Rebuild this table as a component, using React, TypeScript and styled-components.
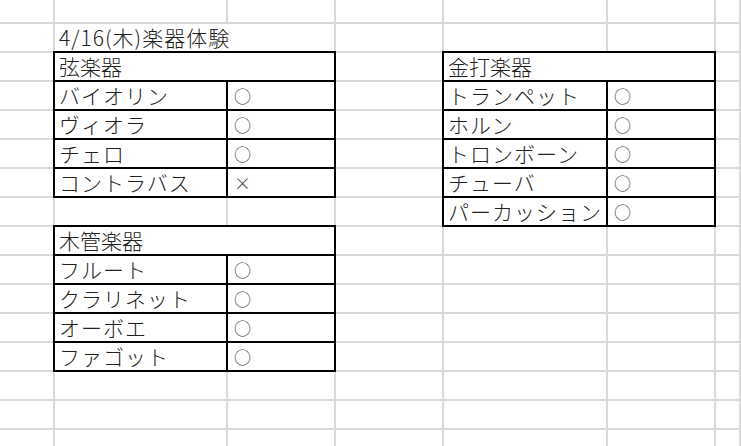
import { Fragment } from "react";
import styled, { createGlobalStyle } from "styled-components";

type Row = { name: string; mark: string };
type Section = { title: string; col: string; row: string; widths: string; rows: Row[] };

const GlobalStyle = createGlobalStyle`
  html, body {
    margin: 0;
    padding: 0;
    background: #fff;
  }
  body {
    font-family: "Noto Sans CJK JP", "Noto Sans", sans-serif;
    overflow: hidden;
  }
`;

const Sheet = styled.div`
  display: grid;
  grid-template-columns: 55px 173px 108px 108px 164px 108px 1fr;
  grid-template-rows: 24px repeat(15, 29px);
  width: 741px;
  height: 446px;
  overflow: hidden;
  background: #fff;
`;

const Cell = styled.div`
  box-sizing: border-box;
  border-right: 2px solid #dadada;
  border-bottom: 2px solid #dadada;
`;

const Title = styled(Cell)`
  grid-column: 2 / 4;
  grid-row: 2;
  padding-left: 4px;
  font-size: 21px;
  font-weight: 300;
  line-height: 26px;
  letter-spacing: 1px;
  color: #222;
  white-space: nowrap;
`;

const Table = styled.div<{ $col: string; $row: string; $widths: string }>`
  grid-column: ${(p) => p.$col};
  grid-row: ${(p) => p.$row};
  margin: -2px 0 0 -2px;
  position: relative;
  z-index: 1;
  display: grid;
  grid-template-columns: ${(p) => p.$widths};
  grid-auto-rows: 29px;
  border-top: 2px solid #000;
  border-left: 2px solid #000;
  background: #fff;
`;

const TableCell = styled.div<{ $span?: boolean }>`
  box-sizing: border-box;
  grid-column: ${(p) => (p.$span ? "1 / 3" : "auto")};
  border-right: 2px solid #000;
  border-bottom: 2px solid #000;
  padding-left: 4px;
  font-size: 21px;
  font-weight: 300;
  line-height: 26px;
  letter-spacing: ${(p) => (p.$span ? "0" : "1px")};
  color: #222;
  white-space: nowrap;
`;

const MarkCell = styled.div`
  box-sizing: border-box;
  display: flex;
  align-items: center;
  border-right: 2px solid #000;
  border-bottom: 2px solid #000;
  padding-left: 6px;
  font-size: 17px;
  font-weight: 300;
  color: #333;
`;

const sections: Section[] = [
  {
    title: "弦楽器",
    col: "2 / 4",
    row: "3 / 8",
    widths: "173px 108px",
    rows: [
      { name: "バイオリン", mark: "○" },
      { name: "ヴィオラ", mark: "○" },
      { name: "チェロ", mark: "○" },
      { name: "コントラバス", mark: "×" },
    ],
  },
  {
    title: "木管楽器",
    col: "2 / 4",
    row: "9 / 14",
    widths: "173px 108px",
    rows: [
      { name: "フルート", mark: "○" },
      { name: "クラリネット", mark: "○" },
      { name: "オーボエ", mark: "○" },
      { name: "ファゴット", mark: "○" },
    ],
  },
  {
    title: "金打楽器",
    col: "5 / 7",
    row: "3 / 9",
    widths: "164px 108px",
    rows: [
      { name: "トランペット", mark: "○" },
      { name: "ホルン", mark: "○" },
      { name: "トロンボーン", mark: "○" },
      { name: "チューバ", mark: "○" },
      { name: "パーカッション", mark: "○" },
    ],
  },
];

// 7 columns x 16 rows, minus the title and the three tables
const used = 2 + sections.reduce((n, s) => n + (s.rows.length + 1) * 2, 0);
const fillers = 7 * 16 - used;

function App() {
  return (
    <>
      <GlobalStyle />
      <Sheet>
        <Title>4/16(木)楽器体験</Title>
        {sections.map((s) => (
          <Table key={s.title} $col={s.col} $row={s.row} $widths={s.widths}>
            <TableCell $span>{s.title}</TableCell>
            {s.rows.map((r) => (
              <Fragment key={r.name}>
                <TableCell>{r.name}</TableCell>
                <MarkCell>{r.mark}</MarkCell>
              </Fragment>
            ))}
          </Table>
        ))}
        {Array.from({ length: fillers }, (_, i) => (
          <Cell key={i} />
        ))}
      </Sheet>
    </>
  );
}

export default App;
